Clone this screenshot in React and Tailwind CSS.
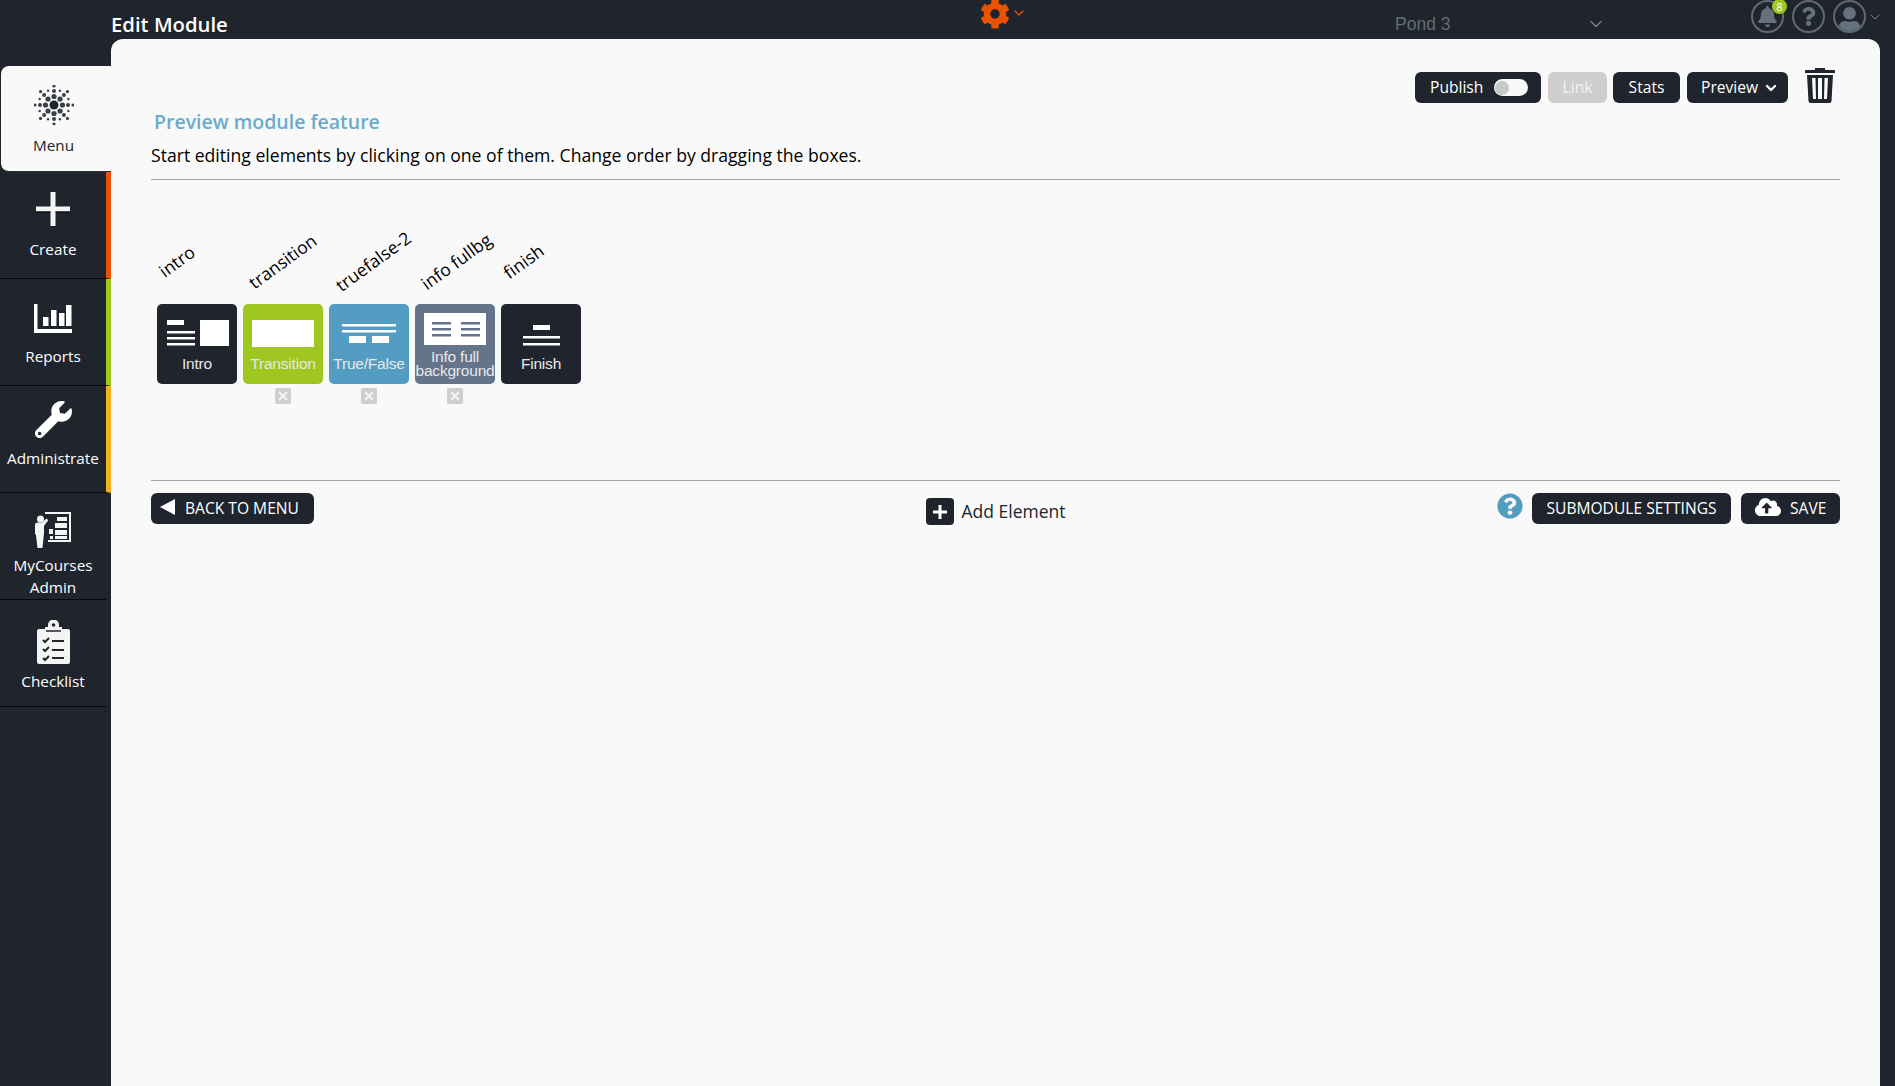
import React from "react";
import { FaBell, FaCog, FaWrench, FaCloudUploadAlt, FaQuestionCircle, FaQuestion, FaUser } from "react-icons/fa";
import { ChevronDown } from "lucide-react";

const font = { fontFamily: '"Open Sans", "Noto Sans", sans-serif' };

function DotsIcon() {
  const dots = [];
  for (let i = 0; i < 8; i++) {
    const a = (i * Math.PI) / 4;
    [
      [8.5, 2.6],
      [14, 2],
      [19, 1.6],
    ].forEach(([r, s], k) => dots.push(<circle key={`${i}-${k}`} cx={20 + r * Math.sin(a)} cy={20 - r * Math.cos(a)} r={s} />));
    const b = a + Math.PI / 8;
    dots.push(<circle key={`o-${i}`} cx={20 + 15.5 * Math.sin(b)} cy={20 - 15.5 * Math.cos(b)} r={1.2} />);
  }
  return (
    <svg width="40" height="40" viewBox="0 0 40 40" fill="#3a4048">
      <circle cx="20" cy="20" r="4.5" fill="#20252d" />
      {dots}
    </svg>
  );
}

function PlusIcon() {
  return (
    <svg width="36" height="36" viewBox="0 0 36 36">
      <path d="M15.5 1h5v14.5H35v5H20.500V35h-5V20.500H1v-5h14.500z" fill="#f4f4f4" />
      <path d="M1 20.500h14.500v1H1zM20.500 20.500H35v1H20.500z" fill="#000" />
    </svg>
  );
}

function ChartIcon() {
  return (
    <svg width="38" height="30" viewBox="0 0 38 30" fill="#fff">
      <path d="M0 0h3.500v25H38v4H0z" />
      <rect x="9" y="13" width="5.500" height="9" />
      <rect x="17" y="6" width="5.500" height="16" />
      <rect x="25" y="9" width="5.500" height="13" />
      <rect x="32" y="1" width="5.500" height="21" />
    </svg>
  );
}

function TeacherIcon() {
  return (
    <svg width="38" height="38" viewBox="0 0 38 38" fill="#f4f4f4">
      <circle cx="6.500" cy="8" r="3.500" />
      <path d="M1 14c0-1.500 1-2.500 2.500-2.500H8l4.500-4 1.800 1.800L10 15v7l-1.500 15h-5L2 24l-1-1z" />
      <path d="M11 1h26v30H14v-2h21V3H11z" />
      <path d="M23 6h10v4H23zM21 12h12v5H21zM15 18h4v5h-4zM21 19h12v5H21zM16 25h3v3h-3zM21 25h12v3H21z" />
    </svg>
  );
}

function ChecklistIcon() {
  return (
    <svg width="33" height="46" viewBox="0 0 33 46" fill="#f4f4f4">
      <path d="M2 9h6V7h3V5a5.500 5.500 0 0 1 11 0v2h3v2h6a2 2 0 0 1 2 2v31a2 2 0 0 1-2 2H2a2 2 0 0 1-2-2V11a2 2 0 0 1 2-2z" />
      <circle cx="16.500" cy="5" r="1.800" fill="#20252d" />
      <path d="M9 11h15" stroke="#20252d" strokeWidth="1.500" />
      <g fill="none" stroke="#20252d" strokeWidth="2">
        <path d="M6 20l2 2 4-4M6 29l2 2 4-4M6 38l2 2 4-4" />
        <path d="M15 21h12M15 30h12M15 38h12" />
      </g>
    </svg>
  );
}

function TrashIcon() {
  return (
    <svg width="30" height="36" viewBox="0 0 30 36" fill="#20252d">
      <path d="M10 3V1h10v2h9a1 1 0 0 1 1 1v2H0V4a1 1 0 0 1 1-1z" />
      <path d="M2 8h26l-1.500 26a2 2 0 0 1-2 2h-19a2 2 0 0 1-2-2zM7 11l1 21h3l-.5-21zM13 11v21h4V11zM19.500 11L19 32h3l1-21z" fillRule="evenodd" />
    </svg>
  );
}

function NavItem({ label, icon, border, active, iconClass = "h-[46px]", labelClass = "mt-[6px]" }) {
  return (
    <div
      className={`flex flex-col items-center pt-[13px] border-b border-black/80 ${border || ""} ${
        active ? "h-[106px] bg-[#f9f9f9] text-[#20252d] rounded-l-lg ml-px pr-[5px]" : "h-[107px] text-white"
      }`}
    >
      <div className={`flex items-center justify-center ${iconClass}`}>{icon}</div>
      <div className={`text-[15.300px] leading-[22px] text-center whitespace-nowrap ${labelClass}`}>{label}</div>
    </div>
  );
}

function TopIcon({ children }) {
  return (
    <div className="w-[33px] h-[33px] rounded-full border-2 border-[#5f6974] flex items-center justify-center overflow-hidden text-[#65717d]">
      {children}
    </div>
  );
}

function Btn({ children, className = "" }) {
  return (
    <div className={`h-[31px] pt-px rounded-md bg-[#20252d] text-white text-[15.600px] flex items-center ${className}`}>{children}</div>
  );
}

function Block({ label, bg, lines, removable, title }) {
  return (
    <div className="w-[80px] relative">
      <div className="h-[93px] flex items-end mb-[31px]">
        <div className="w-fit whitespace-nowrap text-[17.500px] leading-[24px] text-black -rotate-[36deg]">{title}</div>
      </div>
      <div className={`h-[80px] rounded-[5px] flex flex-col items-center ${bg}`}>
        <div className="h-[48px] w-full">{lines}</div>
        <div
          className="text-[15.500px] leading-[14px] text-[#e8e8e8] text-center tracking-[-0.2px] h-[24px] flex items-center whitespace-nowrap"
          style={{ fontFamily: '"Liberation Sans", sans-serif' }}
        >
          <span>{label}</span>
        </div>
      </div>
      {removable && (
        <div className="mx-auto mt-[4px] w-[16px] h-[16px] rounded-[2px] bg-[#cfcfcf] flex items-center justify-center">
          <svg width="10" height="10" viewBox="0 0 10 10" stroke="#f5f5f5" strokeWidth="2">
            <path d="M1 1l8 8M9 1l-8 8" />
          </svg>
        </div>
      )}
    </div>
  );
}

const introArt = (
  <svg width="80" height="48" viewBox="0 0 80 48" fill="#fff">
    <rect x="10" y="16" width="17" height="5" />
    <rect x="10" y="27" width="28" height="2.500" />
    <rect x="10" y="33" width="28" height="2.500" />
    <rect x="10" y="39" width="28" height="2.500" />
    <rect x="43" y="16" width="29" height="26" />
  </svg>
);
const transitionArt = (
  <svg width="80" height="48" viewBox="0 0 80 48" fill="#fff">
    <rect x="9" y="16" width="62" height="27" />
  </svg>
);
const trueFalseArt = (
  <svg width="80" height="48" viewBox="0 0 80 48" fill="#fff">
    <rect x="13" y="20" width="54" height="2.500" />
    <rect x="13" y="26" width="54" height="2.500" />
    <rect x="20" y="32" width="17" height="7" />
    <rect x="43" y="32" width="17" height="7" />
  </svg>
);
const infoArt = (
  <svg width="80" height="48" viewBox="0 0 80 48" fill="#fff">
    <rect x="9" y="9" width="62" height="32" />
    <g fill="#64748a">
      <rect x="17" y="18" width="19" height="2.500" />
      <rect x="17" y="24" width="19" height="2.500" />
      <rect x="17" y="30" width="19" height="2.500" />
      <rect x="46" y="18" width="19" height="2.500" />
      <rect x="46" y="24" width="19" height="2.500" />
      <rect x="46" y="30" width="19" height="2.500" />
    </g>
  </svg>
);
const finishArt = (
  <svg width="80" height="48" viewBox="0 0 80 48" fill="#fff">
    <rect x="32" y="21" width="17" height="5" />
    <rect x="22" y="32" width="37" height="2.500" />
    <rect x="22" y="39" width="37" height="2.500" />
  </svg>
);

export default function App() {
  return (
    <div className="h-[1086px] w-full flex bg-[#20252d] overflow-hidden" style={font}>
      {/* side nav */}
      <aside className="w-[111px] shrink-0 pt-[66px]">
        <NavItem active label="Menu" icon={<DotsIcon />} iconClass="h-[40px] mt-[6px]" labelClass="mt-[9px]" />
        <NavItem
          label="Create"
          icon={<PlusIcon />}
          iconClass="h-[36px] mt-[6px]"
          labelClass="mt-[11px]"
          border="border-r-[5px] border-r-[#e85200]"
        />
        <NavItem
          label="Reports"
          icon={<ChartIcon />}
          iconClass="h-[36px] mt-[9px]"
          labelClass="mt-[8px]"
          border="border-r-[5px] border-r-[#a0c71f]"
        />
        <NavItem
          label="Administrate"
          icon={<FaWrench size={37} color="#fff" />}
          iconClass="h-[40px]"
          labelClass="mt-[8px]"
          border="border-r-[5px] border-r-[#f0b323]"
        />
        <NavItem
          label={
            <>
              MyCourses
              <br />
              Admin
            </>
          }
          icon={<TeacherIcon />}
          iconClass="h-[38px] mt-[5px]"
          labelClass="mt-[5px]"
          border="mr-[5px]"
        />
        <NavItem label="Checklist" icon={<ChecklistIcon />} iconClass="h-[46px] mt-[7px]" labelClass="mt-[4px]" border="mr-[5px]" />
      </aside>

      <div className="flex-1 flex flex-col min-w-0 mr-[15px]">
        {/* top bar */}
        <header className="h-[39px] shrink-0 flex relative">
          <div className="text-[20.300px] font-semibold text-white leading-[26px] pt-[11px]">Edit Module</div>
          <div className="absolute left-[869px] top-[-1px] flex items-center text-[#e85200]">
            <FaCog size={30} />
            <ChevronDown size={16} strokeWidth={2} className="ml-[1px] -mt-[3px]" />
          </div>
          <div
            className="absolute left-[1284px] top-[13px] text-[17.500px] leading-[22px] text-[#646c76]"
            style={{ fontFamily: '"Liberation Sans", sans-serif' }}
          >
            Pond 3
          </div>
          <ChevronDown size={20} strokeWidth={1.500} className="absolute left-[1475px] top-[14px] text-[#7a828b]" />
          <div className="absolute left-[1640px] top-0 flex items-center gap-[8px]">
            <div className="relative">
              <TopIcon>
                <FaBell size={21} />
              </TopIcon>
              <div className="absolute -top-[1px] left-[21px] w-[15px] h-[15px] rounded-full bg-[#a0c71f] text-white text-[11px] leading-[15px] text-center">
                8
              </div>
            </div>
            <TopIcon>
              <FaQuestion size={19} />
            </TopIcon>
            <TopIcon>
              <FaUser size={25} className="mt-[6px]" />
            </TopIcon>
            <ChevronDown size={16} strokeWidth={1.500} className="-ml-[7px] text-[#7a828b]" />
          </div>
        </header>

        {/* panel */}
        <main className="flex-1 bg-[#f9f9f9] rounded-t-xl pl-[40px] pr-[40px] pt-[28px]">
          <div className="flex justify-end items-start h-[40px]">
            <Btn className="w-[126px] pl-[15px] mt-[5px]">
              Publish
              <span className="ml-[11px] w-[34px] h-[17px] -mt-px rounded-full bg-[#f9f9f9] flex items-center pl-[1px]">
                <span className="w-[14px] h-[14px] rounded-full bg-[#c9c9c9]" />
              </span>
            </Btn>
            <div className="ml-[7px] mt-[5px] w-[59px] h-[31px] pt-px rounded-md bg-[#cfcdcd] text-[#f2f2f2] text-[15.600px] flex items-center justify-center">
              Link
            </div>
            <Btn className="ml-[6px] mt-[5px] w-[67px] justify-center">Stats</Btn>
            <Btn className="ml-[7px] mt-[5px] w-[101px] pl-[14px]">
              Preview
              <ChevronDown size={16} strokeWidth={3.500} className="ml-[5px] -mt-px" />
            </Btn>
            <div className="ml-[17px] mr-[5px]">
              <TrashIcon />
            </div>
          </div>

          <h2 className="text-[19.500px] font-semibold text-[#6aabcc] leading-[28px] ml-[3px] pt-px h-[28px]">Preview module feature</h2>
          <p className="text-[17.600px] leading-[24px] text-black mt-[8px]">
            Start editing elements by clicking on one of them. Change order by dragging the boxes.
          </p>
          <div className="h-px bg-[#a5a5a5] mt-[12px]" />

          <div className="flex gap-[6px] ml-[6px] h-[300px]">
            <Block title="intro" label="Intro" bg="bg-[#20252d]" lines={introArt} />
            <Block title="transition" label="Transition" bg="bg-[#a0c71f]" lines={transitionArt} removable />
            <Block title="truefalse-2" label="True/False" bg="bg-[#539dc2]" lines={trueFalseArt} removable />
            <Block
              title="info fullbg"
              label={
                <>
                  Info full
                  <br />
                  background
                </>
              }
              bg="bg-[#64748a]"
              lines={infoArt}
              removable
            />
            <Block title="finish" label="Finish" bg="bg-[#20252d]" lines={finishArt} />
          </div>

          <div className="h-px bg-[#a5a5a5]" />
          <div className="flex items-start justify-between mt-[12px]">
            <Btn className="w-[163px] pl-[9px]">
              <svg width="16" height="16" viewBox="0 0 16 16" fill="#fff" className="-mt-[5px]">
                <path d="M15 0v16L0 8z" />
              </svg>
              <span className="ml-[9px]">BACK TO MENU</span>
            </Btn>
            <div className="flex items-center ml-[180px] mt-[5px]">
              <div className="w-[28px] h-[27px] rounded-[4px] bg-[#20252d] flex items-center justify-center">
                <svg width="16" height="16" viewBox="0 0 16 16" fill="#fff">
                  <path d="M6.500 1h3v5.500H15v3H9.500V15h-3V9.500H1v-3h5.500z" />
                </svg>
              </div>
              <span className="ml-[8px] text-[17.500px] text-[#20252d]">Add Element</span>
            </div>
            <div className="flex items-start">
              <FaQuestionCircle size={26} color="#539dc2" className="mr-[9px]" />
              <Btn className="w-[199px] justify-center">SUBMODULE SETTINGS</Btn>
              <Btn className="w-[99px] ml-[10px] pl-[14px]">
                <FaCloudUploadAlt size={26} className="-mt-[4px]" />
                <span className="ml-[9px]">SAVE</span>
              </Btn>
            </div>
          </div>
        </main>
      </div>
    </div>
  );
}
